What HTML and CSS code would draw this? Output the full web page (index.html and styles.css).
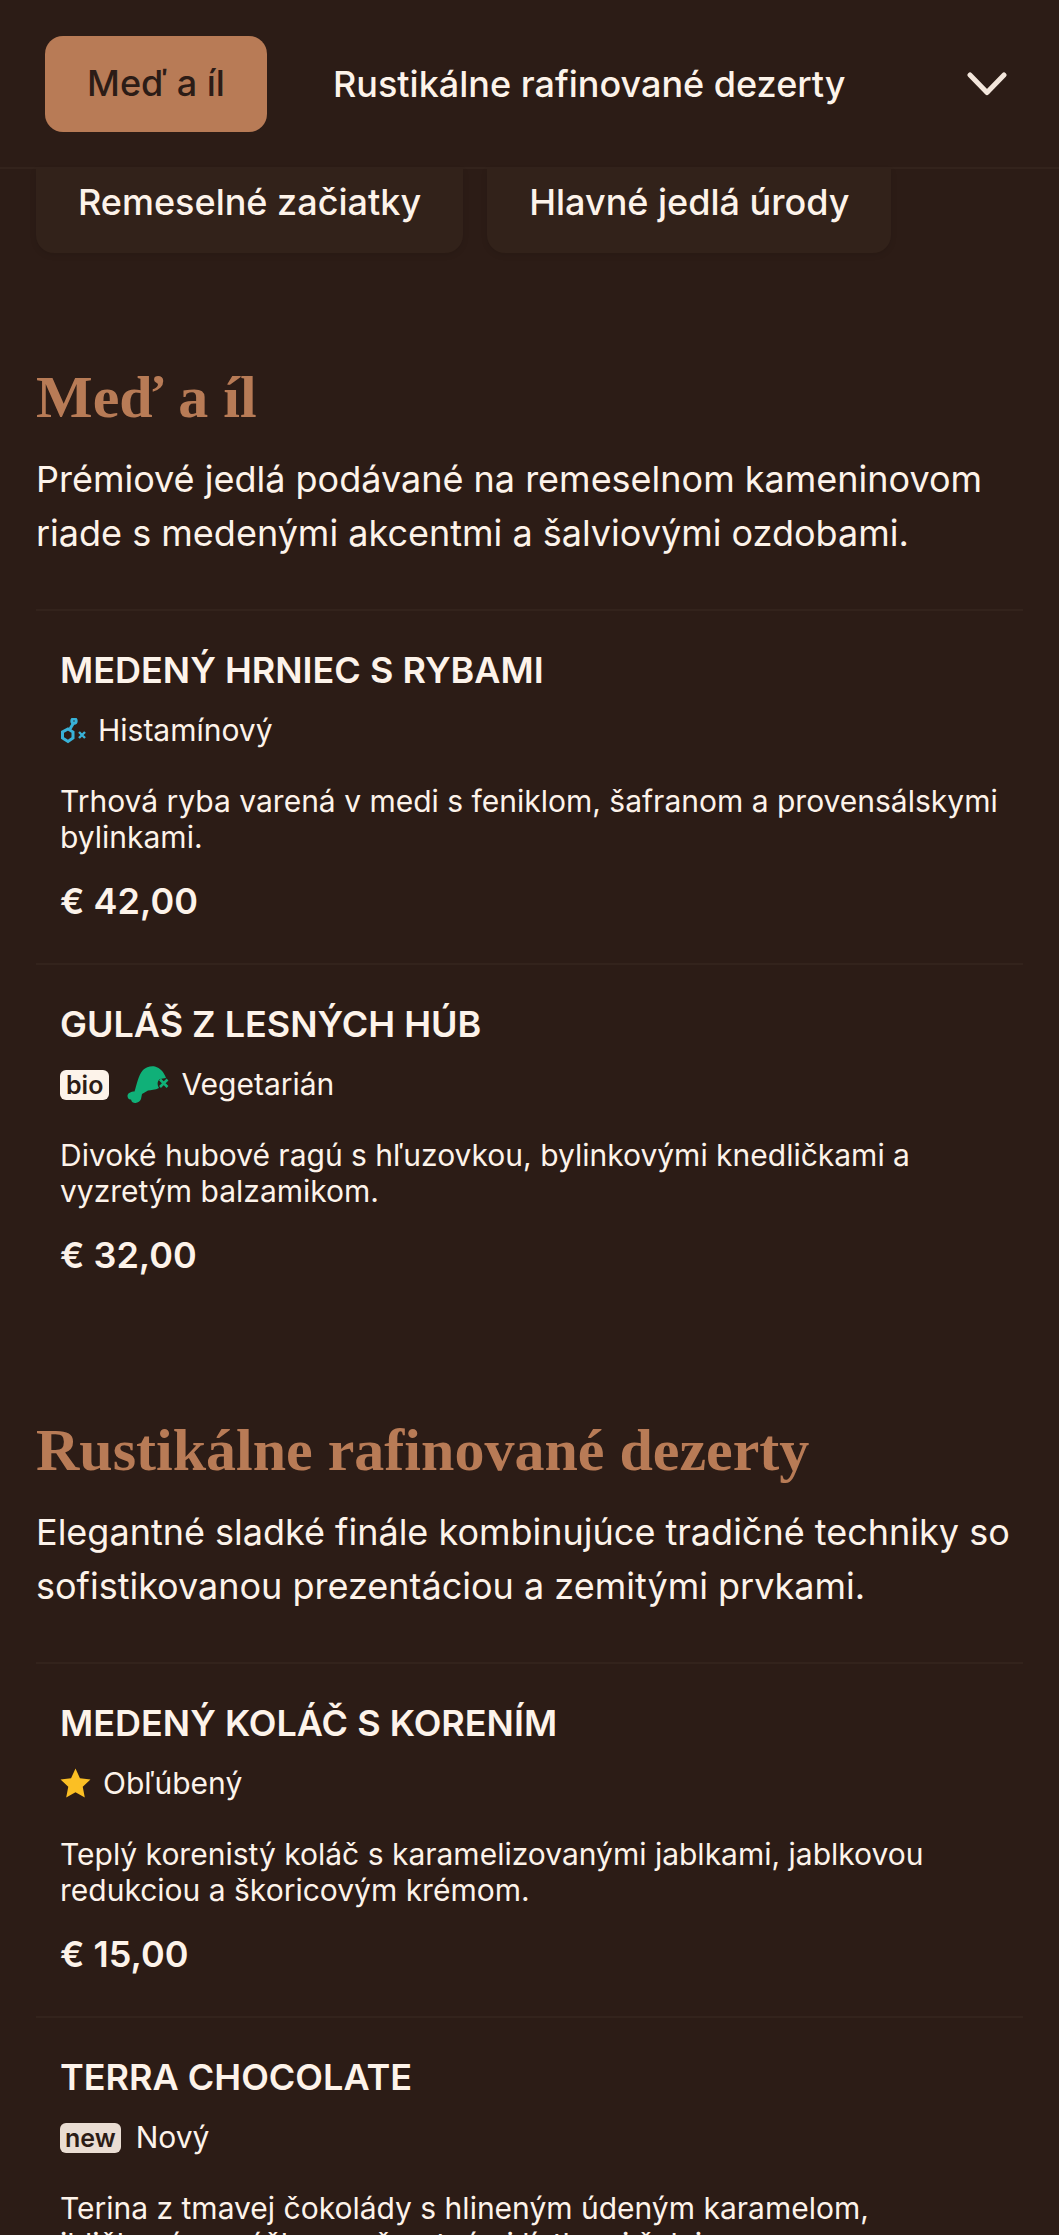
FILE: index.html
```html
<!DOCTYPE html>
<html lang="sk">
<head>
<meta charset="utf-8">
<title>Menu</title>
<link rel="stylesheet" href="styles.css">
</head>
<body>
<header class="topbar">
  <nav class="tabs">
    <a class="tab tab-active">Meď a íl</a>
    <a class="tab">Rustikálne rafinované dezerty</a>
  </nav>
  <svg class="chevron" viewBox="0 0 40 24" width="40" height="24" aria-hidden="true"><path d="M3 3 L20 20.500 L37 3" fill="none" stroke="#f3e6dc" stroke-width="5" stroke-linecap="round" stroke-linejoin="round"/></svg>
</header>
<div class="cards">
  <a class="card">Remeselné začiatky</a>
  <a class="card">Hlavné jedlá úrody</a>
</div>
<main class="menu">
  <section class="section">
    <h2 class="section-title">Meď a íl</h2>
    <p class="section-desc">Prémiové jedlá podávané na remeselnom kameninovom riade s medenými akcentmi a šalviovými ozdobami.</p>
    <ul class="items">
      <li class="item">
        <h3 class="item-title">Medený hrniec s rybami</h3>
        <div class="tags">
          <svg class="ico-hist" viewBox="0 0 26 26" width="26" height="26" aria-hidden="true"><g fill="none" stroke="#38b2d8" stroke-width="3"><circle cx="14" cy="3" r="2.200"/><path d="M13.500 5 L10 11"/><path d="M8 11 L13 14 L13 20 L8 23.500 L2.500 20 L2.500 14 Z"/></g><path d="M19 14 L25 20 M25 14 L19 20" stroke="#38b2d8" stroke-width="2.400"/></svg>
          <span>Histamínový</span>
        </div>
        <p class="item-desc">Trhová ryba varená v medi s feniklom, šafranom a provensálskymi bylinkami.</p>
        <div class="price">€ 42,00</div>
      </li>
      <li class="item">
        <h3 class="item-title">Guláš z lesných húb</h3>
        <div class="tags">
          <span class="badge badge-bio">bio</span>
          <svg class="ico-leg" viewBox="0 0 42 37" width="42" height="37" aria-hidden="true"><path d="M16 4 C19 1 24 -0.500 28 0.500 C33 2 37 6 39 12 L33 13 C30 15 30 19 32 22 C28 24 24 24 21 24.500 L15 28 L14 33 C13 36 9 38 6 36.500 C5 36 4.500 35 4 33.500 C2 34 0.500 32 0.500 30 C0.500 27 4 25.500 7.500 25.500 C10 18 11 10 16 4 Z" fill="#10b078"/><path d="M33 13.500 L40.500 21 M40.500 13.500 L33 21" stroke="#10b078" stroke-width="2.600" fill="none"/></svg>
          <span>Vegetarián</span>
        </div>
        <p class="item-desc">Divoké hubové ragú s hľuzovkou, bylinkovými knedličkami a vyzretým balzamikom.</p>
        <div class="price">€ 32,00</div>
      </li>
    </ul>
  </section>
  <section class="section">
    <h2 class="section-title">Rustikálne rafinované dezerty</h2>
    <p class="section-desc">Elegantné sladké finále kombinujúce tradičné techniky so sofistikovanou prezentáciou a zemitými prvkami.</p>
    <ul class="items">
      <li class="item">
        <h3 class="item-title">Medený koláč s korením</h3>
        <div class="tags">
          <svg class="ico-star" viewBox="0 0 30 30" width="31" height="31" aria-hidden="true"><path d="M15 0.500 L19.300 10 L29.500 11.200 L22 18.200 L24 28.500 L15 23.400 L6 28.500 L8 18.200 L0.500 11.200 L10.700 10 Z" fill="#fbbf24"/></svg>
          <span>Obľúbený</span>
        </div>
        <p class="item-desc">Teplý korenistý koláč s karamelizovanými jablkami, jablkovou redukciou a škoricovým krémom.</p>
        <div class="price">€ 15,00</div>
      </li>
      <li class="item">
        <h3 class="item-title">Terra Chocolate</h3>
        <div class="tags">
          <span class="badge badge-new">new</span>
          <span>Nový</span>
        </div>
        <p class="item-desc">Terina z tmavej čokolády s hlineným údeným karamelom, ihličkovým práškom a čerstvými lístkami šalvie.</p>
      </li>
    </ul>
  </section>
</main>
</body>
</html>
```
FILE: styles.css
```css
* { box-sizing: border-box; }
html, body { margin: 0; padding: 0; }
body {
  height: 2235px;
  overflow: hidden;
  background: #2c1c16;
  color: #fdf3ea;
  font-family: Inter, "Noto Sans", sans-serif;
}
.topbar {
  display: flex;
  align-items: center;
  justify-content: space-between;
  height: 169px;
  padding: 0 52px 0 45px;
  border-bottom: 2px solid #33231c;
}
.tabs { display: flex; align-items: center; gap: 66px; }
.tab { font-size: 36px; font-weight: 500; line-height: 94px; white-space: nowrap; }
.tab-active {
  width: 222px;
  height: 96px;
  text-align: center;
  border-radius: 18px;
  background: #b87b56;
  color: #2c1c16;
}
.cards { display: flex; gap: 24px; padding: 0 36px; }
.card {
  height: 84px;
  padding: 0 42px 18px;
  display: flex;
  align-items: center;
  font-size: 36px;
  font-weight: 500;
  background: #32221a;
  border-radius: 0 0 18px 18px;
  box-shadow: 0 2px 6px rgba(0, 0, 0, 0.1);
}
.menu { padding: 0 36px; }
.section { padding-top: 108px; }
.section + .section { padding-top: 97px; }
.section-title {
  margin: 0 0 19px;
  font-family: "Liberation Serif", serif;
  font-size: 60px;
  line-height: 72px;
  font-weight: 700;
  color: #b87b56;
}
.section-desc { margin: 0 0 49px; font-size: 36px; line-height: 54px; }
.items { list-style: none; margin: 0; padding: 0; }
.item { padding: 35px 24px; border-top: 2px solid #33231c; }
.item-title { margin: 0 0 14px; font-size: 36px; line-height: 48px; font-weight: 600; text-transform: uppercase; }
.tags { display: flex; align-items: center; gap: 12px; font-size: 30px; line-height: 45px; margin-bottom: 30px; }
.badge { font-weight: 600; font-size: 25px; line-height: 30px; padding: 0 6px; border-radius: 6px; color: #2c1c16; }
.badge-bio { background: #fdf3ea; margin-right: 6px; }
.badge-new { background: #eaddd3; padding: 0 5px; margin-right: 3px; }
.item-desc { margin: 0 0 19px; font-size: 30px; line-height: 36px; }
.price { font-size: 36px; line-height: 54px; font-weight: 600; }
```
